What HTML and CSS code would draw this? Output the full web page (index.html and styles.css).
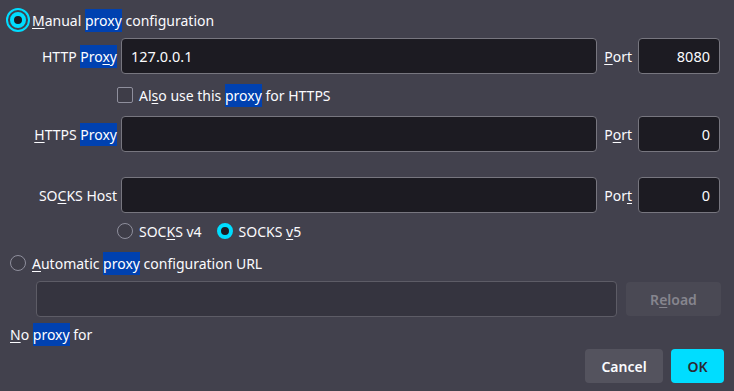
FILE: index.html
```html
<!DOCTYPE html>
<html lang="en">
<head>
  <meta charset="UTF-8"/>
  <title>Connection Settings</title>
  <link rel="stylesheet" href="styles.css">
</head>
<body>
  <div class="dialog">
    <label class="radio-line top">
      <span class="radio checked focused"></span>
      <span><u>M</u>anual <mark>proxy</mark> configuration</span>
    </label>

    <div class="row r-http">
      <span class="lbl">HTTP <mark>Pro<u>x</u>y</mark></span>
      <div class="field">127.0.0.1</div>
      <span class="port-lbl"><u>P</u>ort</span>
      <div class="field port">8080</div>
    </div>

    <label class="check-line">
      <span class="box"></span>
      <span>Al<u>s</u>o use this <mark>proxy</mark> for HTTPS</span>
    </label>

    <div class="row r-https">
      <span class="lbl"><u>H</u>TTPS <mark>Proxy</mark></span>
      <div class="field"></div>
      <span class="port-lbl">P<u>o</u>rt</span>
      <div class="field port">0</div>
    </div>

    <div class="row r-socks">
      <span class="lbl">SO<u>C</u>KS Host</span>
      <div class="field"></div>
      <span class="port-lbl">Por<u>t</u></span>
      <div class="field port">0</div>
    </div>

    <div class="socks-line">
      <label class="opt"><span class="radio"></span><span>SOC<u>K</u>S v4</span></label>
      <label class="opt"><span class="radio checked"></span><span>SOCKS <u>v</u>5</span></label>
    </div>

    <label class="radio-line auto">
      <span class="radio"></span>
      <span><u>A</u>utomatic <mark>proxy</mark> configuration URL</span>
    </label>

    <div class="url-line">
      <div class="field disabled"></div>
      <button class="btn reload" disabled>R<u>e</u>load</button>
    </div>

    <div class="noproxy"><u>N</u>o <mark>proxy</mark> for</div>

    <div class="actions">
      <button class="btn cancel">Cancel</button>
      <button class="btn ok">OK</button>
    </div>
  </div>
</body>
</html>
```

FILE: styles.css
```css
body {
  margin: 0; background: #42414d; color: #fbfbfe;
  font-family: "Noto Sans", sans-serif; font-size: 14px;
}
.dialog { width: 734px; height: 391px; padding-top: 9px; box-sizing: border-box; }
mark { background: #0041b0; color: #fff; padding: 2px 0; }
u { text-underline-offset: 2px; }

.radio {
  width: 16px; height: 16px; border-radius: 50%; box-sizing: border-box;
  border: 1.5px solid #8f8f9d; background: #3e3d48; flex: none;
}
.radio.checked { border: 4px solid #00ddff; background: #1c1b22; }
.radio.focused { outline: 2px solid #00ddff; outline-offset: 2px; }

.radio-line { display: flex; align-items: center; gap: 6px; height: 22px; }
.radio-line.top { padding-left: 10px; gap: 6px; }
.radio-line.auto { padding-left: 10px; margin-top: 15px; height: 18px; }

.row { display: flex; align-items: center; height: 36px; padding-right: 14px; }
.r-http { margin-top: 7px; }
.r-https { margin-top: 13px; }
.r-socks { margin-top: 25px; }
.lbl { width: 117px; padding-right: 4px; text-align: right; white-space: nowrap; flex: none; }
.port-lbl { padding: 0 6px 0 7px; }
.field {
  flex: 1; height: 36px; box-sizing: border-box; border: 1px solid #77767f;
  border-radius: 4px; background: #1c1b22; padding: 0 9px;
  display: flex; align-items: center; font-size: 14.5px;
}
.field.port { flex: none; width: 82px; justify-content: flex-end; }

.check-line { display: flex; align-items: center; gap: 6px; margin: 13px 0 0 117px; height: 16px; }
.box {
  width: 16px; height: 16px; box-sizing: border-box; border: 1px solid #8f8f9d;
  border-radius: 2px; background: #3e3d48;
}

.socks-line { display: flex; gap: 15px; margin: 10px 0 0 117px; height: 16px; }
.opt { display: flex; align-items: center; gap: 6px; }

.url-line { display: flex; gap: 9px; margin: 9px 13px 0 36px; height: 36px; }
.field.disabled { background: #35343f; border-color: #5d5c66; }

.btn {
  font-family: inherit; font-size: 14px; font-weight: 600; border: none;
  border-radius: 4px; height: 34px; padding: 0;
}
.reload { align-self: center; width: 95px; background: #4a4954; color: #86858e; }
.noproxy { margin: 8px 0 0 10px; height: 20px; line-height: 20px; }
.actions { display: flex; justify-content: flex-end; gap: 8px; margin: 4px 10px 0 0; }
.cancel { width: 78px; background: #54535e; color: #fbfbfe; }
.ok { width: 53px; background: #00ddff; color: #2b2a33; }
```
